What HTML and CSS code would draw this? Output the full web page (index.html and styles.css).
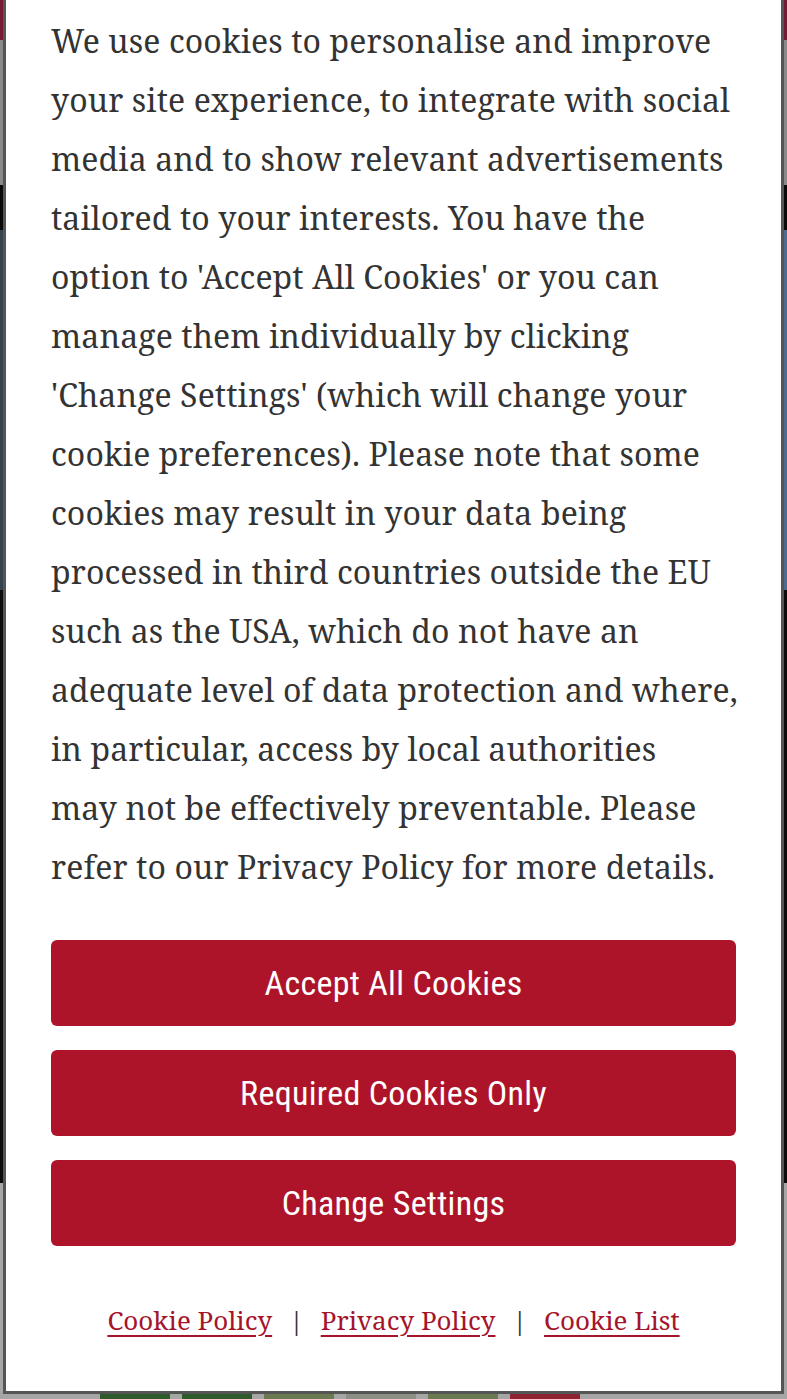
FILE: index.html
```html
<!DOCTYPE html>
<html>
<head>
  <title>Cookie Consent</title>
  <link rel="stylesheet" href="styles.css">
</head>
<body>
  <header class="site-header"></header>
  <nav class="site-nav"></nav>
  <div class="site-strip"></div>
  <section class="hero"></section>
  <section class="content"></section>
  <footer class="site-footer">
    <div class="thumbs">
      <span class="thumb green"></span>
      <span class="thumb green"></span>
      <span class="thumb olive"></span>
      <span class="thumb gray"></span>
      <span class="thumb olive"></span>
      <span class="thumb red"></span>
    </div>
  </footer>

  <div id="cookie-modal" class="cookie-modal">
    <p class="cookie-text">
      We use cookies to personalise and improve your site experience, to integrate with social
      media and to show relevant advertisements tailored to your interests. You have the
      option to 'Accept All Cookies' or you can manage them individually by clicking
      'Change Settings' (which will change your cookie preferences). Please note that some
      cookies may result in your data being processed in third countries outside the EU
      such as the USA, which do not have an adequate level of data protection and where,
      in particular, access by local authorities may&nbsp;not be effectively preventable. Please
      refer to our Privacy Policy for more details.
    </p>

    <div class="cookie-buttons">
      <button class="cookie-button">Accept All Cookies</button>
      <button class="cookie-button">Required Cookies Only</button>
      <button class="cookie-button">Change Settings</button>
    </div>

    <div class="cookie-links">
      <a href="#">Cookie Policy</a>
      <span class="sep">|</span>
      <a href="#">Privacy Policy</a>
      <span class="sep">|</span>
      <a href="#">Cookie List</a>
    </div>
  </div>
</body>
</html>
```

FILE: styles.css
```css
body {
  margin: 0;
  background-color: #9a9a9a;
  font-family: "Noto Serif", "DejaVu Serif", serif;
}

/* Page behind the modal (darkened) */
.site-header {
  height: 40px;
  background-color: #741a33;
}

.site-nav {
  height: 145px;
  background-color: #8a8a8a;
}

.site-strip {
  height: 45px;
  background-color: #0a0a0a;
}

.hero {
  height: 360px;
  background: linear-gradient(to right, #37424f, #4e6c90);
}

.content {
  height: 593px;
  background-color: #0c0c0c;
}

.site-footer {
  height: 216px;
  background-color: #a6a6a6;
  padding-top: 210px;
  box-sizing: border-box;
  overflow: hidden;
}

.thumbs {
  display: flex;
  gap: 12px;
  padding-left: 100px;
}

.thumb {
  width: 70px;
  height: 6px;
}

.thumb.green { background-color: #2f5a2c; }
.thumb.olive { background-color: #6c7a52; }
.thumb.gray { background-color: #8c8f86; }
.thumb.red { background-color: #8e2230; }

/* Modal */
.cookie-modal {
  position: fixed;
  top: -41px;
  left: 3px;
  right: 3px;
  background-color: #fff;
  border: 3px solid #555;
  padding: 49px 45px 51px;
  z-index: 100;
}

.cookie-text {
  margin: 0 -8px 0 0;
  font-size: 32px;
  line-height: 59px;
  letter-spacing: 0.1px;
  color: #333;
}

.cookie-buttons {
  display: flex;
  flex-direction: column;
  gap: 24px;
  margin-top: 44px;
}

.cookie-button {
  height: 86px;
  border: none;
  border-radius: 6px;
  background-color: #ae1429;
  color: #fff;
  font-family: "Roboto Condensed", Roboto, sans-serif;
  font-size: 34px;
  letter-spacing: 0.3px;
  cursor: pointer;
}

.cookie-links {
  display: flex;
  justify-content: center;
  align-items: center;
  gap: 17px;
  margin-top: 54px;
  height: 40px;
  font-size: 26px;
}

.cookie-links a {
  color: #a5142b;
  text-decoration: underline;
  text-underline-offset: 5px;
  text-decoration-thickness: 2px;
}

.cookie-links .sep {
  color: #333;
}
```
